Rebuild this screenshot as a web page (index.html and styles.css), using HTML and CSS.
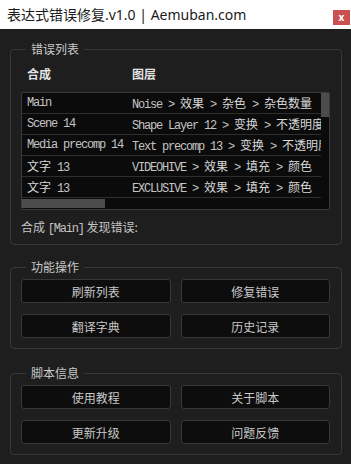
FILE: index.html
```html
<!DOCTYPE html>
<html lang="zh-CN">
<head>
    <meta charset="UTF-8">
    <meta name="viewport" content="width=device-width, initial-scale=1.0">
    <title>表达式错误修复</title>
    <link rel="stylesheet" href="styles.css">
</head>
<body>
    <div class="titlebar">
        <div class="title">表达式错误修复.v1.0 | Aemuban.com</div>
        <div class="close">x</div>
    </div>

    <div class="main">
        <fieldset class="group first">
            <legend>错误列表</legend>
            <div class="list-head">
                <div>合成</div>
                <div>图层</div>
            </div>
            <div class="listbox">
                <div class="list-body">
                    <div class="rows">
                        <div class="row">
                            <div>Main</div>
                            <div>Noise &gt; <span class="zh">效果</span> &gt; <span class="zh">杂色</span> &gt; <span class="zh">杂色数量</span></div>
                        </div>
                        <div class="row">
                            <div>Scene 14</div>
                            <div>Shape Layer 12 &gt; <span class="zh">变换</span> &gt; <span class="zh">不透明度</span></div>
                        </div>
                        <div class="row">
                            <div>Media precomp 14</div>
                            <div>Text precomp 13 &gt; <span class="zh">变换</span> &gt; <span class="zh">不透明度</span></div>
                        </div>
                        <div class="row">
                            <div><span class="zh">文字</span> 13</div>
                            <div>VIDEOHIVE &gt; <span class="zh">效果</span> &gt; <span class="zh">填充</span> &gt; <span class="zh">颜色</span></div>
                        </div>
                        <div class="row">
                            <div><span class="zh">文字</span> 13</div>
                            <div>EXCLUSIVE &gt; <span class="zh">效果</span> &gt; <span class="zh">填充</span> &gt; <span class="zh">颜色</span></div>
                        </div>
                    </div>
                    <div class="vscroll"><div class="thumb"></div></div>
                </div>
                <div class="hscroll"><div class="thumb"></div></div>
            </div>
            <div class="status">合成 <span class="mono">[Main]</span> 发现错误:</div>
        </fieldset>

        <fieldset class="group">
            <legend>功能操作</legend>
            <div class="buttons">
                <button>刷新列表</button>
                <button>修复错误</button>
                <button>翻译字典</button>
                <button>历史记录</button>
            </div>
        </fieldset>

        <fieldset class="group">
            <legend>脚本信息</legend>
            <div class="buttons">
                <button>使用教程</button>
                <button>关于脚本</button>
                <button>更新升级</button>
                <button>问题反馈</button>
            </div>
        </fieldset>
    </div>
</body>
</html>
```

FILE: styles.css
```css
body {
    margin: 0;
    width: 351px;
    height: 464px;
    overflow: hidden;
    background-color: #1e1e1e;
    font-family: "Noto Sans", "Noto Sans CJK SC", sans-serif;
    color: #c8c8c8;
}
.titlebar {
    height: 29px;
    background-color: #fff;
    display: flex;
    align-items: flex-start;
}
.title {
    margin: 6px 0 0 7px;
    font-size: 14px;
    line-height: 18px;
    color: #1a1a1a;
}
.close {
    margin: 10px 1px 0 auto;
    width: 17px;
    height: 15px;
    background-color: #c9514f;
    color: #fff;
    font-size: 10px;
    font-weight: bold;
    line-height: 14px;
    text-align: center;
}
.main {
    padding: 13px 9px 0 10px;
}
.group {
    margin: 0 0 17px;
    padding: 5px 11px 10px 10px;
    border: 1px solid #383838;
    border-radius: 4px;
    min-width: 0;
}
.group.first {
    margin-bottom: 15px;
    padding-bottom: 7px;
}
.group legend {
    margin-left: 5px;
    padding: 0 5px;
    font-family: "Noto Sans CJK SC", sans-serif;
    font-size: 12px;
    line-height: 14px;
    color: #c8c8c8;
}
.list-head {
    display: grid;
    grid-template-columns: 105px 1fr;
    padding: 5px 0 10px 6px;
    font-family: "Noto Sans CJK SC", sans-serif;
    font-size: 12px;
    font-weight: bold;
    line-height: 16px;
    color: #e2e2e2;
}
.listbox {
    border: 1px solid #3a3a3a;
    border-radius: 2px;
    background-color: #0b0b0b;
}
.list-body {
    display: flex;
}
.rows {
    flex: 1;
    min-width: 0;
}
.row {
    display: grid;
    grid-template-columns: 105px 1fr;
    height: 20px;
    padding-left: 5px;
    border-bottom: 1px solid #2e2e2e;
    font-family: "Liberation Mono", monospace;
    font-size: 12px;
    letter-spacing: -1.2px;
    line-height: 20px;
    white-space: nowrap;
    overflow: hidden;
    color: #c4c4c4;
}
.row div {
    overflow: hidden;
}
.zh {
    font-family: "Noto Sans CJK SC", sans-serif;
    font-size: 12px;
    letter-spacing: 0;
    color: #d8d8d8;
}
.vscroll {
    width: 8px;
    background-color: #0b0b0b;
}
.vscroll .thumb {
    height: 24px;
    background-color: #4c4c4c;
}
.hscroll {
    height: 11px;
    padding-top: 1px;
    box-sizing: border-box;
}
.hscroll .thumb {
    width: 83px;
    height: 9px;
    background-color: #4c4c4c;
}
.status {
    margin-top: 9px;
    font-family: "Noto Sans CJK SC", sans-serif;
    font-size: 12px;
    line-height: 16px;
    color: #c4c4c4;
}
.mono {
    font-family: "Liberation Mono", monospace;
    font-size: 12px;
    letter-spacing: -1.2px;
}
.buttons {
    display: grid;
    grid-template-columns: 1fr 1fr;
    gap: 11px 10px;
}
.buttons button {
    height: 24px;
    padding: 0;
    background-color: #0d0d0d;
    border: 1px solid #383838;
    border-radius: 3px;
    font-family: "Noto Sans CJK SC", sans-serif;
    font-size: 12px;
    color: #c8c8c8;
    cursor: pointer;
}
.buttons button:hover {
    background-color: #1a1a1a;
}
```
